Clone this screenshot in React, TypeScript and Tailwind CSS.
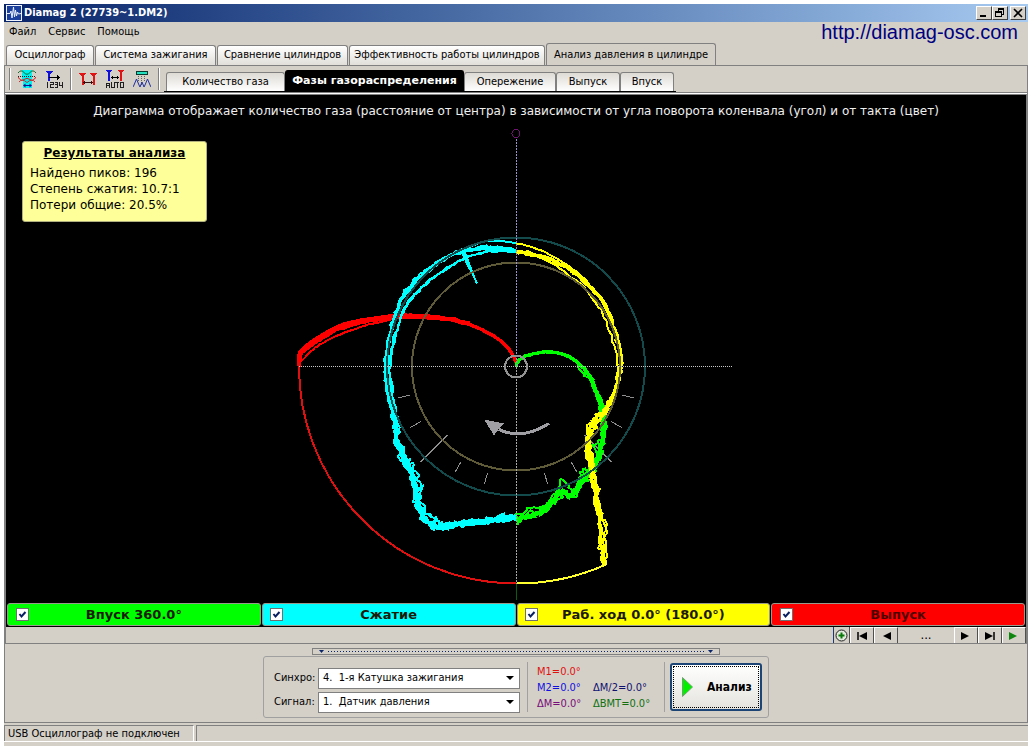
import React, { useState } from "react";
import clsx from "clsx";

type Point = [number, number];

const CX = 516;
const CY = 366;

/* ---------- trace geometry ---------- */

function makeRandom(seed: number) {
  let s = seed * 7919;
  return () => {
    s = (s * 16807) % 2147483647;
    return s / 2147483647 - 0.5;
  };
}

function smooth(points: Point[], steps: number): Point[] {
  const out: Point[] = [];
  for (let i = 0; i < points.length - 1; i++) {
    const p0 = points[Math.max(0, i - 1)];
    const p1 = points[i];
    const p2 = points[i + 1];
    const p3 = points[Math.min(points.length - 1, i + 2)];
    for (let k = 0; k < steps; k++) {
      const t = k / steps;
      const f = (a: number, b: number, c: number, d: number) =>
        0.5 * (2 * b + (c - a) * t + (2 * a - 5 * b + 4 * c - d) * t * t + (3 * b - a - 3 * c + d) * t * t * t);
      out.push([f(p0[0], p1[0], p2[0], p3[0]), f(p0[1], p1[1], p2[1], p3[1])]);
    }
  }
  out.push(points[points.length - 1]);
  return out;
}

function trace(points: Point[], jitter: number, seed: number, steps = 5): string {
  const rnd = makeRandom(seed);
  return smooth(points, steps)
    .map(([x, y], i) => {
      const jx = i === 0 ? 0 : rnd() * jitter;
      const jy = i === 0 ? 0 : rnd() * jitter;
      return `${i ? "L" : "M"}${(x + jx).toFixed(1)} ${(y + jy).toFixed(1)}`;
    })
    .join("");
}

const exhaust: Point[] = [[516, 362], [514, 357], [509, 349], [500, 340], [489, 333], [470, 324], [442, 317], [415, 315], [396, 315], [365, 319], [340, 325], [320, 336], [302, 349], [299, 358], [299, 366]];
const exhaustMid: Point[] = [[470, 324], [442, 318], [415, 316], [396, 317], [365, 321], [340, 328], [320, 339], [302, 352], [300, 362]];
const exhaustLow: Point[] = [[415, 316], [396, 318], [380, 322], [365, 325], [340, 334], [320, 344], [312, 350], [300, 362]];

const compTop: Point[] = [[516, 250], [500, 248], [480, 248], [464, 251], [447, 257], [430, 268], [415, 281], [402, 298], [395, 318], [389, 340], [386, 366], [388, 390], [392, 408]];
const compInner: Point[] = [[516, 252], [495, 250], [475, 254], [455, 263], [435, 276], [415, 294], [405, 308], [399, 325], [393, 345], [390, 366], [391, 385], [394, 410]];
const compOuter: Point[] = [[516, 243], [495, 240], [478, 243], [463, 250], [445, 258], [428, 272]];
const compDown: Point[] = [[388, 380], [393, 408], [395, 425], [397, 442], [403, 457], [410, 471], [415, 488], [418, 506], [424, 517], [435, 526], [446, 526], [460, 524], [480, 522], [500, 519], [516, 518]];
const compDownInner: Point[] = [[394, 410], [397, 436], [405, 458], [413, 466], [419, 482], [422, 488], [421, 502], [428, 513], [436, 518], [440, 523], [455, 521], [475, 523], [490, 520], [502, 514], [510, 518], [516, 515]];

const powerMain: Point[] = [[516, 251], [530, 253], [546, 257], [560, 263], [575, 272], [590, 286], [603, 302], [612, 321], [618, 342], [621, 362], [618, 381], [613, 397], [606, 407]];
const powerInner: Point[] = [[516, 252], [533, 255], [555, 265], [580, 283], [596, 302], [606, 321], [614, 345], [618, 364], [616, 382], [610, 400]];
const powerOuter: Point[] = [[516, 243], [530, 246], [548, 253], [563, 262], [580, 274], [592, 287], [605, 303], [613, 321]];
const powerDown: Point[] = [[613, 397], [605, 410], [596, 417], [590, 426], [588, 438], [588, 452], [590, 468], [594, 485], [597, 505], [600, 525], [601, 545], [603, 563]];
const powerDownB: Point[] = [[613, 397], [606, 411], [599, 420], [592, 430], [590, 441], [591, 456], [592, 470], [597, 487], [600, 508], [605, 528], [605, 545], [606, 562]];

const intake: Point[] = [[516, 366], [518, 361], [525, 356], [540, 352], [555, 352], [569, 356], [580, 364], [590, 376], [596, 390], [601, 401], [604, 415], [603, 435], [600, 452], [594, 467], [584, 480], [571, 494], [561, 492], [551, 503], [540, 512], [528, 516], [516, 519]];
const intakeSide: Point[] = [[580, 364], [590, 378], [599, 400], [601, 412], [602, 436], [594, 446], [596, 456], [588, 469], [580, 480], [570, 497], [562, 489], [551, 500], [540, 510], [528, 514], [517, 523]];
const intakeSpike: Point[] = [[588, 471], [584, 468], [579, 477], [574, 489], [568, 486], [561, 478], [559, 488], [552, 495], [548, 503], [538, 507], [528, 508], [524, 514], [516, 514]];

const offset = (pts: Point[], dx: number, dy: number): Point[] => pts.map(([x, y]) => [x + dx, y + dy]);

const TRACES = [
  {
    color: "#ff0000",
    bold: [trace(exhaust, 0.4, 11), trace(exhaustMid, 1.2, 13)],
    thin: [trace(exhaust, 1.4, 12), trace(offset(exhaustMid, 0, 1), 1.6, 14), trace(offset(exhaustMid, 0, -2), 1.8, 15), trace(exhaustLow, 0.8, 16)],
  },
  {
    color: "#00ffff",
    bold: [trace(compTop, 1.8, 21), trace(compDown, 3, 26), trace(compDown, 5, 27), "M463 252L470 268"],
    thin: [
      trace(compTop, 4, 22), trace(offset(compTop, -1, -1), 3.4, 23), trace(compInner, 2, 24),
      trace(compOuter, 0.8, 25), trace(offset(compDown, 1, -1), 7, 28), trace(offset(compDown, -1, 0), 7, 51),
      trace(compDownInner, 5, 29), trace(offset(compInner, -1, 0), 2.4, 30), trace(offset(compDown, 2, 0), 6, 52),
      "M461 248L477 283M465 252L475 279",
    ],
  },
  {
    color: "#00ff00",
    bold: [trace(intake, 0.8, 31), trace(intake.slice(7), 4, 32)],
    thin: [trace(offset(intake.slice(6), -1, 1), 6, 33), trace(intakeSide, 4, 34), trace(offset(intake.slice(8), 1, 1), 6, 35), trace(intakeSpike, 2, 36)],
  },
  {
    color: "#ffff00",
    bold: [trace(powerMain, 1.8, 41), trace(powerDown, 3, 46)],
    thin: [
      trace(powerMain, 4, 42), trace(offset(powerMain, 0, 1), 3, 43), trace(powerInner, 2, 44), trace(powerOuter, 1, 45),
      trace(powerDown, 6, 47), trace(powerDownB, 3, 48), trace(powerDownB, 6, 49), trace(offset(powerDown, 1, 0), 5, 50),
    ],
  },
];

const TICKS = [15, 30, 45, 60, 75, 105, 120, 135, 150, 165].map((deg) => {
  const a = (deg * Math.PI) / 180;
  const long = deg === 45 || deg === 135;
  const r1 = long ? 97 : 110;
  const r2 = long ? 135 : 122;
  return {
    x1: CX + r1 * Math.cos(a), y1: CY + r1 * Math.sin(a),
    x2: CX + r2 * Math.cos(a), y2: CY + r2 * Math.sin(a),
  };
});

function PhaseDiagram() {
  return (
    <svg className="block min-h-[479px] w-full flex-1" viewBox="6 123 1020 479" role="img" aria-label="Фазы газораспределения" shapeRendering="crispEdges" fill="none">
      {TICKS.map((t, i) => (
        <line key={i} {...t} stroke="#8f8f8f" />
      ))}
      {TRACES.map((t) => (
        <g key={t.color} stroke={t.color} strokeLinejoin="round">
          {t.bold.map((d, i) => (
            <path key={i} d={d} strokeWidth="3.5" />
          ))}
          {t.thin.map((d, i) => (
            <path key={i} d={d} strokeWidth="2" />
          ))}
        </g>
      ))}
      <path d="M299 362A217 217 0 0 0 516 583" stroke="#e01010" strokeWidth="2" />
      <path d="M516 583A217 217 0 0 0 606 564V560" stroke="#ffff30" strokeWidth="2" />
      <circle cx={CX} cy={CY} r="129" stroke="#134b4d" strokeWidth="2" />
      <circle cx={CX} cy={CY} r="104" stroke="#5f5b38" strokeWidth="2" />
      <path d="M299 365.5H733" stroke="#c8c8c8" strokeDasharray="1 1" />
      <path d="M516.5 138V366" stroke="#9a90d0" strokeDasharray="2 1" />
      <path d="M516.5 366V583" stroke="#a8a8a8" strokeDasharray="2 1" />
      <path d="M516.5 583V599" stroke="#0c5c14" />
      <circle cx={CX} cy="133" r="4" stroke="#6e1470" />
      <circle cx={CX} cy={CY} r="11" stroke="#929292" strokeWidth="2" />
      <path d="M549 423Q522 440 499 429" stroke="#a0a0a4" strokeWidth="3" />
      <path d="M484 419L504 423L499 428L494 435Z" fill="#a0a0a4" />
    </svg>
  );
}

/* ---------- icons ---------- */

const WaveLogo = () => (
  <svg className="size-4" viewBox="0 0 16 16">
    <rect width="16" height="16" fill="#f0f4ff" />
    <rect x="1" y="1" width="14" height="14" fill="#1a3f9c" />
    <path d="M1 8.500H4L5 6L6 13L7.500 2L8.500 12L9.500 5L10.500 11L11.500 7L12.500 9L15 8.500" stroke="#e8f0ff" fill="none" />
  </svg>
);

const WavesIcon = () => (
  <svg className="size-[18px]" viewBox="0 0 18 18" fill="none">
    <path d="M4 0H14V18H5V12L4 8Z" fill="#00f0f0" shapeRendering="crispEdges" />
    <path d="M0 3Q3 -1 6 2.500T12 2.500T18 3" stroke="#0a6a2a" />
    <path d="M0 6.500H18" stroke="#202020" strokeDasharray="1 1" shapeRendering="crispEdges" />
    <path d="M0 7Q3 12 6 9.500T12 9.500T18 7" stroke="#d02020" />
    <path d="M1 12Q4 8 9 12.500Q14 8 17 12" stroke="#c03030" />
    <path d="M6 15.500H13" stroke="#101090" shapeRendering="crispEdges" />
    <path d="M5 15.500L7.500 13.500V17.500ZM14 15.500L11.500 13.500V17.500Z" fill="#101090" />
  </svg>
);

const CountIcon = () => (
  <svg className="size-[18px]" viewBox="0 0 18 18" shapeRendering="crispEdges" fill="none">
    <path d="M0 1H8L5 4V11H3V4Z" fill="#1010d8" />
    <path d="M4 7.500H13" stroke="#000" />
    <path d="M12 5L15 7.500L12 10Z" fill="#000" />
    <path d="M2.500 12V18M5 12.500H8.500V14.500H5.500V17.500H9M10 12.500H12.500V17.500H10M10 14.500H12M14.500 12V15.500H17.500M17.500 12V18" stroke="#202020" />
  </svg>
);

const SpanIcon = () => (
  <svg className="size-[18px]" viewBox="0 0 18 18" shapeRendering="crispEdges" fill="none">
    <path d="M0 3H7L4.500 6V15H2.500V6ZM11 3H18L15.500 6V15H13.500V6Z" fill="#e01414" />
    <path d="M5 12.500H13" stroke="#301010" />
    <path d="M4 12.500L6 10.500V14.500ZM14 12.500L12 10.500V14.500Z" fill="#301010" />
  </svg>
);

const AutoIcon = () => (
  <svg className="size-[18px]" viewBox="0 0 18 18" shapeRendering="crispEdges" fill="none">
    <path d="M0 0H6L4 3V11H2V3Z" fill="#1010d8" />
    <path d="M12 0H18L16 3V11H14V3Z" fill="#e01414" />
    <path d="M6 7.500H12" stroke="#000" />
    <path d="M5 7.500L7 5.500V9.500ZM13 7.500L11 5.500V9.500Z" fill="#000" />
    <path d="M.5 18V13.500H3.500V18M.5 15.500H3M5.500 12V17.500H8.500V12M9 12.500H13M11.500 12V18M14.500 12.500H17.500V17.500H14.500Z" stroke="#202020" />
  </svg>
);

const PeaksIcon = () => (
  <svg className="size-[18px]" viewBox="0 0 18 18" fill="none">
    <rect x="3.500" y="1.500" width="11" height="3" fill="#20e0c0" stroke="#083830" shapeRendering="crispEdges" />
    <path d="M5.500 6V12M8.500 6V16M11.500 6V12" stroke="#606060" strokeDasharray="1 1" />
    <path d="M0 17L1 15L3.500 9L6 15L7 17L9 12L11 17L12 15L14.500 9L17 15L18 17" stroke="#2030a0" />
  </svg>
);

const Triangle = ({ dir, color = "#000", bar = false }: { dir: "left" | "right"; color?: string; bar?: boolean }) => (
  <svg className={clsx("h-2.5 w-3.5", dir === "left" && "-scale-x-100")} viewBox="0 0 14 10">
    <path d="M2 1L10 5L2 9Z" fill={color} />
    {bar && <path d="M11 1V9" stroke={color} strokeWidth="1.500" />}
  </svg>
);

/* ---------- chrome pieces ---------- */

const CAPTION = "flex h-[14px] w-4 items-center justify-center border border-t-white border-l-white border-r-[#404040] border-b-[#404040] bg-[#d4d0c8]";

function TitleBar() {
  return (
    <header className="flex h-[18px] items-center gap-0.5 bg-linear-to-r from-[#0a246a] to-[#a6caf0] px-0.5">
      <WaveLogo />
      <h1 className="flex-1 text-[11px] leading-[18px] font-bold text-white">Diamag 2 (27739~1.DM2)</h1>
      <div className="flex">
        <button className={CAPTION} aria-label="Свернуть">
          <svg className="size-2.5" viewBox="0 0 10 10" shapeRendering="crispEdges"><path d="M1 7H7V9H1Z" /></svg>
        </button>
        <button className={CAPTION} aria-label="Восстановить">
          <svg className="size-2.5" viewBox="0 0 10 10" shapeRendering="crispEdges" fill="none" stroke="#000">
            <path d="M3.500 3V.5H8.500V6H7M3 1.500H9M.5 3.500H6.500V8.500H.5ZM0 4.500H7" />
          </svg>
        </button>
      </div>
      <button className={CAPTION} aria-label="Закрыть">
        <svg className="size-2.5" viewBox="0 0 10 10" stroke="#000" strokeWidth="1.600"><path d="M1 1L9 9M9 1L1 9" /></svg>
      </button>
    </header>
  );
}

const MAIN_TABS = [
  { label: "Осциллограф", width: "w-[88px]" },
  { label: "Система зажигания", width: "w-[121px]" },
  { label: "Сравнение цилиндров", width: "w-[131px]" },
  { label: "Эффективность работы цилиндров", width: "w-[196px]" },
  { label: "Анализ давления в цилиндре", width: "w-[170px]" },
];

const SUB_TABS = [
  { label: "Количество газа", width: "w-[119px]" },
  { label: "Фазы газораспределения", width: "w-[179px]" },
  { label: "Опережение", width: "w-[92px]" },
  { label: "Выпуск", width: "w-[64px]" },
  { label: "Впуск", width: "w-[54px]" },
];

function MainTabs() {
  const [active, setActive] = useState(4);
  return (
    <div role="tablist" className="flex h-[22px] items-end gap-px pl-0.5">
      {MAIN_TABS.map((t, i) => (
        <button
          key={t.label}
          role="tab"
          aria-selected={i === active}
          onClick={() => setActive(i)}
          className={clsx(
            "flex items-center justify-center rounded-t-[3px] border border-b-0 border-[#808080] whitespace-nowrap",
            t.width,
            i === active ? "-mb-px h-[23px] bg-[#d4d0c8]" : "h-5 bg-linear-to-b from-white to-[#e2dfd9]",
          )}
        >
          {t.label}
        </button>
      ))}
    </div>
  );
}

function SubTabs() {
  const [active, setActive] = useState(1);
  return (
    <div role="tablist" className="flex h-[22px] items-end border-b border-black px-0.5">
      {SUB_TABS.map((t, i) => (
        <button
          key={t.label}
          role="tab"
          aria-selected={i === active}
          onClick={() => setActive(i)}
          className={clsx(
            "flex items-center justify-center rounded-t-[3px] border border-b-0 whitespace-nowrap",
            t.width,
            i === active
              ? "h-[21px] border-black bg-black font-['DejaVu_Sans',sans-serif] font-bold text-white"
              : "h-[19px] border-[#808080] bg-linear-to-b from-[#dedbd5] to-white",
          )}
        >
          {t.label}
        </button>
      ))}
    </div>
  );
}

const Divider = () => <div className="h-[22px] w-0.5 border-r border-l border-r-white border-l-[#808080]" />;

function Toolbar() {
  return (
    <div className="flex h-[26px] items-end gap-1 pl-1">
      <div className="flex h-[26px] items-center gap-[7px]">
        <Divider />
        <button aria-label="Наложение сигналов"><WavesIcon /></button>
        <button className="pl-0.5" aria-label="Нумерация"><CountIcon /></button>
        <Divider />
        <button aria-label="Маркеры"><SpanIcon /></button>
        <button className="pl-0.5" aria-label="Автомаркеры"><AutoIcon /></button>
        <button className="pl-0.5" aria-label="Пики"><PeaksIcon /></button>
        <Divider />
      </div>
      <SubTabs />
    </div>
  );
}

const STROKES = [
  { id: "intake", label: "Впуск 360.0°", color: "bg-[#00ff00]" },
  { id: "compression", label: "Сжатие", color: "bg-[#00ffff]" },
  { id: "power", label: "Раб. ход 0.0° (180.0°)", color: "bg-[#ffff00]" },
  { id: "exhaust", label: "Выпуск", color: "bg-[#ff0000]" },
];

function StrokeBar() {
  return (
    <div className="grid grid-cols-4 gap-px px-px pb-px font-['DejaVu_Sans',sans-serif]">
      {STROKES.map((s) => (
        <div key={s.id} className={clsx("grid h-[23px] grid-cols-[28px_1fr_28px] items-center rounded-[3px] border border-[#9a9a8c]", s.color)}>
          <span className="grid justify-center">
            <input id={s.id} type="checkbox" defaultChecked className="peer col-start-1 row-start-1 size-[13px] appearance-none border border-[#707070] bg-white" />
            <svg className="pointer-events-none col-start-1 row-start-1 hidden size-[13px] peer-checked:block" viewBox="0 0 13 13" fill="none" stroke="#0a1f60" strokeWidth="2">
              <path d="M3.500 6L5.500 8.500L9.500 4" />
            </svg>
          </span>
          <label htmlFor={s.id} className={clsx("text-center text-[13px] leading-5 font-bold", s.id === "exhaust" ? "text-[#500000]" : "text-[#1c1a08]")}>{s.label}</label>
        </div>
      ))}
    </div>
  );
}

const STEP = "flex h-4 w-6 items-center justify-center border-t border-r border-l border-t-white border-r-[#505050] border-l-white";

function PlaybackBar() {
  return (
    <div className="flex h-4 justify-end">
      <button className="flex h-4 w-[17px] items-center justify-center border-r border-l border-r-[#505050] border-l-[#1c3878]" aria-label="Добавить">
        <svg className="size-[13px]" viewBox="0 0 13 13" fill="none">
          <circle cx="6.500" cy="6.500" r="5.500" fill="#e0e8dc" stroke="#202020" />
          <path d="M6.500 3.500V9.500M3.500 6.500H9.500" stroke="#087808" strokeWidth="2" />
        </svg>
      </button>
      <button className={STEP} aria-label="В начало"><Triangle dir="left" bar /></button>
      <button className={STEP} aria-label="Назад"><Triangle dir="left" /></button>
      <span className="w-14 text-center text-[13px] leading-4">...</span>
      <button className={STEP} aria-label="Вперёд"><Triangle dir="right" /></button>
      <button className={STEP} aria-label="В конец"><Triangle dir="right" bar /></button>
      <button className={STEP} aria-label="Пуск"><Triangle dir="right" color="#0c860c" /></button>
    </div>
  );
}

function ChannelSelect({ id, label, value }: { id: string; label: string; value: string }) {
  return (
    <>
      <label htmlFor={id}>{label}</label>
      <span className="grid">
        <select id={id} className="col-start-1 row-start-1 h-[21px] w-full appearance-none border border-[#808080] bg-white pl-1">
          <option>{value}</option>
        </select>
        <svg className="pointer-events-none col-start-1 row-start-1 mr-1.5 h-1 w-2 self-center justify-self-end" viewBox="0 0 8 4"><path d="M0 0H8L4 4Z" /></svg>
      </span>
    </>
  );
}

const DownMark = () => (
  <svg className="h-[3px] w-[5px]" viewBox="0 0 5 3"><path d="M0 0H5L2.500 3Z" fill="#0a246a" /></svg>
);

function ControlPanel() {
  return (
    <section className="flex flex-col items-center pt-1 pb-1">
      <button aria-label="Свернуть панель" className="flex h-[7px] w-[408px] items-center gap-1 border border-[#808080] px-1.5">
        <DownMark />
        <svg className="h-px flex-1" shapeRendering="crispEdges">
          <line x1="0" y1="0.500" x2="100%" y2="0.500" stroke="#0a246a" strokeDasharray="1 2" />
        </svg>
        <DownMark />
      </button>
      <div className="mt-px flex h-[62px] w-[506px] items-center rounded-[3px] border border-[#a0a0a0] pl-2.5">
        <div className="grid w-[246px] grid-cols-[40px_1fr] items-center gap-x-1 gap-y-[3px] pt-1.5">
          <ChannelSelect id="sync" label="Синхро:" value={"4.\u00a0 1-я Катушка зажигания"} />
          <ChannelSelect id="signal" label="Сигнал:" value={"1.\u00a0 Датчик давления"} />
        </div>
        <dl className="ml-[7px] grid h-[50px] w-[138px] grid-cols-[56px_1fr] content-end border-r border-l border-[#a0a0a0] pl-[9px] leading-4">
          <dd className="col-span-2 text-[#e01010]">M1=0.0°</dd>
          <dd className="text-[#1010e0]">M2=0.0°</dd>
          <dd className="text-[#101070]">ΔM/2=0.0°</dd>
          <dd className="text-[#780c78]">ΔM=0.0°</dd>
          <dd className="text-[#107010]">ΔВМТ=0.0°</dd>
        </dl>
        <button className="ml-[5px] h-12 w-[92px] rounded-[3px] border-2 border-[#1c4474] bg-linear-to-b from-white to-[#e4e3de] p-px">
          <span className="flex h-full items-center gap-3.5 border border-dotted border-black pl-2 text-[12px] font-bold">
            <svg className="h-5 w-[11px]" viewBox="0 0 11 20"><path d="M.5 .5L10.500 10L.5 19.500Z" fill="#00f000" stroke="#70a070" /></svg>
            Анализ
          </span>
        </button>
      </div>
    </section>
  );
}

export default function App() {
  return (
    <div className="flex min-h-screen flex-col bg-white px-1 pt-1 font-['DejaVu_Sans_Condensed','DejaVu_Sans',sans-serif] text-[11px] text-black">
      <div className="flex flex-1 flex-col bg-[#d4d0c8]">
        <TitleBar />
        <div className="flex h-[21px] items-center justify-between pr-2.5">
          <nav className="flex gap-3 pl-[5px]">
            <button>Файл</button>
            <button>Сервис</button>
            <button>Помощь</button>
          </nav>
          <a href="http://diamag-osc.com" className="font-['Liberation_Sans',sans-serif] text-[20px] leading-[21px] text-[#000080]">http://diamag-osc.com</a>
        </div>
        <MainTabs />
        <main className="flex flex-1 flex-col border border-[#808080]">
          <Toolbar />
          <div className="flex flex-1 flex-col border-t border-[#808080] pt-px shadow-[inset_0_1px_0_white]">
            <div className="flex flex-1 flex-col border-t border-r border-l border-[#808080]">
              <div className="relative flex flex-1 flex-col bg-black font-['DejaVu_Sans',sans-serif]">
                <p className="pt-2 pb-1 text-center text-[12px] leading-4 text-[#f0f0f0]">
                  Диаграмма отображает количество газа (расстояние от центра) в зависимости от угла поворота коленвала (угол) и от такта (цвет)
                </p>
                <PhaseDiagram />
                <aside className="absolute top-[46px] left-4 h-[81px] w-[185px] rounded-[3px] border border-[#b0b080] bg-[#ffff99] px-[7px] pt-[3px] text-[12px] leading-4">
                  <h2 className="mb-1 text-center font-bold underline">Результаты анализа</h2>
                  <p>Найдено пиков: 196</p>
                  <p>Степень сжатия: 10.7:1</p>
                  <p>Потери общие: 20.5%</p>
                </aside>
                <StrokeBar />
              </div>
              <PlaybackBar />
            </div>
          </div>
          <div className="border-t border-[#808080]">
            <ControlPanel />
          </div>
        </main>
        <footer className="mt-0.5 mb-1 flex h-[17px] gap-0.5 border-b border-white">
          <span className="w-[190px] border-t border-r border-l border-[#808080] border-r-white pl-[3px] leading-4">USB Осциллограф не подключен</span>
          <span className="flex-1 border-t border-l border-[#808080]" />
        </footer>
      </div>
    </div>
  );
}
